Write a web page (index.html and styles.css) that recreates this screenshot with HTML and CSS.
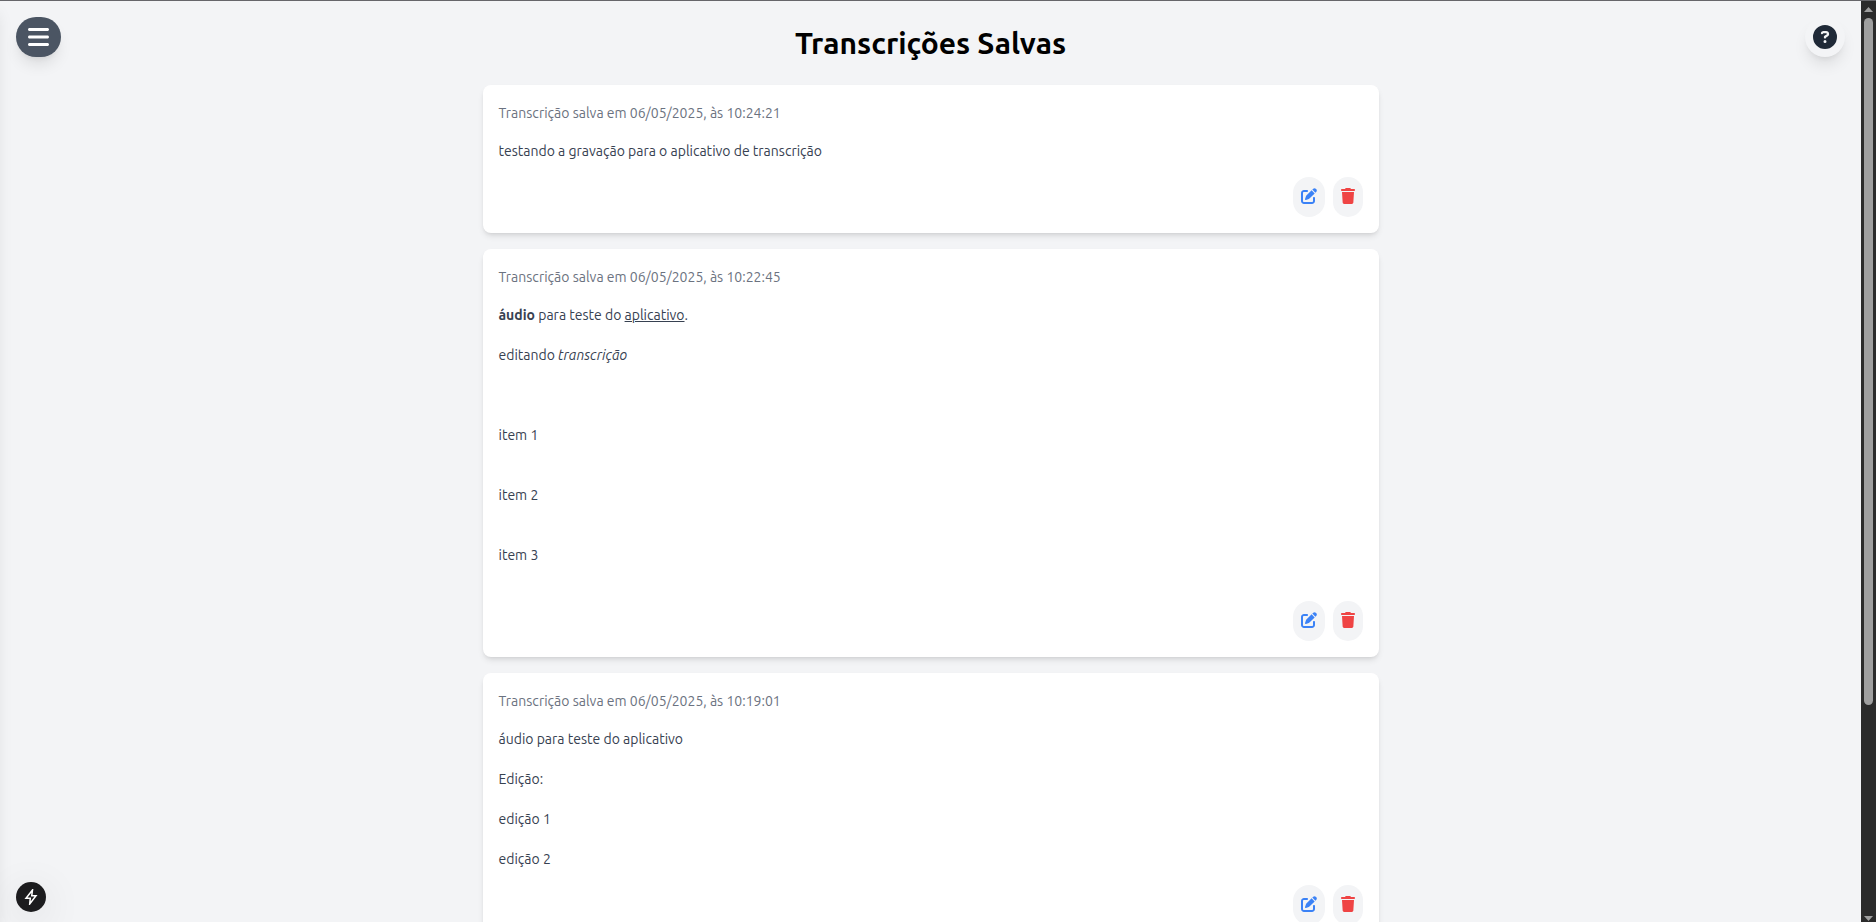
FILE: index.html
```
<!DOCTYPE html>
<html lang="pt-BR">
<head>
<meta charset="utf-8">
<title>Transcrições Salvas</title>
<link rel="stylesheet" href="styles.css">
</head>
<body>
<svg class="sprite" aria-hidden="true">
  <symbol id="edit" viewBox="0 0 512 512"><path d="M471.600 21.700c-21.900-21.900-57.300-21.900-79.200 0L362.300 51.700l97.900 97.900 30.100-30.100c21.900-21.900 21.900-57.300 0-79.200L471.600 21.700zm-299.200 220c-6.100 6.100-10.800 13.600-13.500 21.900l-29.600 88.800c-2.900 8.600-.6 18.100 5.800 24.600s15.900 8.700 24.600 5.800l88.800-29.600c8.200-2.700 15.700-7.400 21.900-13.500L437.700 172.300 339.700 74.300 172.400 241.700zM96 64C43 64 0 107 0 160V416c0 53 43 96 96 96H352c53 0 96-43 96-96V320c0-17.700-14.300-32-32-32s-32 14.300-32 32v96c0 17.700-14.300 32-32 32H96c-17.700 0-32-14.300-32-32V160c0-17.700 14.300-32 32-32h96c17.700 0 32-14.300 32-32s-14.300-32-32-32H96z"/></symbol>
  <symbol id="trash" viewBox="0 0 448 512"><path d="M135.200 17.700L128 32H32C14.300 32 0 46.300 0 64S14.300 96 32 96H416c17.700 0 32-14.300 32-32s-14.300-32-32-32H320l-7.200-14.300C307.400 6.800 296.300 0 284.200 0H163.800c-12.100 0-23.200 6.800-28.600 17.700zM416 128H32L53.200 467c1.600 25.300 22.600 45 47.900 45H346.900c25.300 0 46.300-19.700 47.900-45L416 128z"/></symbol>
</svg>
<div class="window">
  <div class="page">
    <div class="drawer"></div>
    <button class="menu-button" type="button" aria-label="Abrir menu">
      <svg viewBox="0 0 448 512"><path d="M0 96C0 78.300 14.300 64 32 64H416c17.700 0 32 14.300 32 32s-14.300 32-32 32H32C14.300 128 0 113.700 0 96zM0 256c0-17.700 14.300-32 32-32H416c17.700 0 32 14.300 32 32s-14.300 32-32 32H32c-17.700 0-32-14.300-32-32zM448 416c0 17.700-14.300 32-32 32H32c-17.700 0-32-14.300-32-32s14.300-32 32-32H416c17.700 0 32 14.300 32 32z"/></svg>
    </button>
    <button class="help-button" type="button" aria-label="Ajuda">
      <svg viewBox="0 0 512 512"><path d="M256 512A256 256 0 1 0 256 0a256 256 0 1 0 0 512zM169.800 165.300c7.900-22.300 29.100-37.300 52.800-37.300h58.300c34.900 0 63.100 28.300 63.100 63.100c0 22.600-12.100 43.500-31.700 54.800L280 264.400c-.2 13-10.900 23.600-24 23.600c-13.300 0-24-10.700-24-24V250.500c0-8.600 4.600-16.500 12.100-20.800l44.300-25.400c4.700-2.700 7.600-7.700 7.600-13.100c0-8.400-6.800-15.100-15.100-15.100H222.600c-3.400 0-6.400 2.100-7.500 5.300l-.4 1.200c-4.400 12.500-18.200 19-30.600 14.600s-19-18.200-14.600-30.600l.4-1.200zM224 352a32 32 0 1 1 64 0 32 32 0 1 1 -64 0z"/></svg>
    </button>
    <button class="dev-button" type="button" aria-label="Ferramentas">
      <svg viewBox="0 0 16 16"><path d="M9.500 1 3 9.200H7.300L6.700 15 13 6.800H8.700Z"/></svg>
    </button>
    <main class="content">
      <h1 class="title">Transcrições Salvas</h1>
      <article class="card">
        <p class="meta">Transcrição salva em 06/05/2025, às 10:24:21</p>
        <div class="text"><p>testando a gravação para o aplicativo de transcrição</p></div>
        <div class="actions">
          <button class="action edit" type="button" aria-label="Editar"><svg><use href="#edit"/></svg></button>
          <button class="action delete" type="button" aria-label="Excluir"><svg><use href="#trash"/></svg></button>
        </div>
      </article>
      <article class="card">
        <p class="meta">Transcrição salva em 06/05/2025, às 10:22:45</p>
        <div class="text">
          <p><strong>áudio</strong> para teste do <u>aplicativo</u>.</p>
          <p>editando <em>transcrição</em></p>
          <ul class="items"><li>item 1</li><li>item 2</li><li>item 3</li></ul>
        </div>
        <div class="actions">
          <button class="action edit" type="button" aria-label="Editar"><svg><use href="#edit"/></svg></button>
          <button class="action delete" type="button" aria-label="Excluir"><svg><use href="#trash"/></svg></button>
        </div>
      </article>
      <article class="card">
        <p class="meta">Transcrição salva em 06/05/2025, às 10:19:01</p>
        <div class="text">
          <p>áudio para teste do aplicativo</p>
          <p>Edição:</p>
          <p>edição 1</p>
          <p>edição 2</p>
        </div>
        <div class="actions">
          <button class="action edit" type="button" aria-label="Editar"><svg><use href="#edit"/></svg></button>
          <button class="action delete" type="button" aria-label="Excluir"><svg><use href="#trash"/></svg></button>
        </div>
      </article>
    </main>
  </div>
  <div class="scrollbar" aria-hidden="true">
    <svg class="arrow" viewBox="0 0 9 5"><path d="M0 5 4.500 0 9 5Z"/></svg>
    <div class="track"><div class="thumb"></div></div>
    <svg class="arrow" viewBox="0 0 9 5"><path d="M0 0 4.500 5 9 0Z"/></svg>
  </div>
</div>
</body>
</html>
```
FILE: styles.css
```
* { box-sizing: border-box; margin: 0; padding: 0; }
body {
  font-family: Ubuntu, "Noto Sans", "Open Sans", sans-serif;
  background: #f3f4f6;
  color: #000;
  overflow: hidden;
}
button { border: 0; cursor: pointer; font: inherit; }
svg { display: block; fill: currentColor; }
.sprite { position: absolute; width: 0; height: 0; }

.window { display: flex; height: 100vh; border-top: 1px solid #66666a; }
.page { position: relative; flex: 1; overflow: hidden; }
.content {
  display: flex;
  flex-direction: column;
  gap: 16px;
  max-width: 896px;
  margin: 0 auto;
  padding: 24px 0;
}
.title {
  margin-bottom: 8px;
  font-size: 30px;
  line-height: 36px;
  font-weight: 600;
  text-align: center;
}

.card {
  display: flex;
  flex-direction: column;
  gap: 16px;
  padding: 16px;
  border-radius: 8px;
  background: #fff;
  box-shadow: 0 4px 6px -1px rgba(0, 0, 0, .1), 0 2px 4px -2px rgba(0, 0, 0, .1);
}
.meta { font-size: 14px; line-height: 24px; color: #6b7280; }
.text {
  display: flex;
  flex-direction: column;
  gap: 20px;
  font-size: 14px;
  line-height: 20px;
  color: #374151;
}
.items {
  display: flex;
  flex-direction: column;
  gap: 40px;
  padding: 40px 0 20px;
  list-style: none;
}
.actions { display: flex; justify-content: flex-end; gap: 8px; }
.action { padding: 11px 8px 13px; border-radius: 16px; background: #f3f4f6; }
.action svg { width: 16px; height: 16px; }
.edit { color: #3b82f6; }
.delete { color: #ef4444; }
.action.delete svg { width: 14px; }

.menu-button, .help-button, .dev-button { position: absolute; }
.menu-button, .help-button {
  top: 16px;
  padding: 8px;
  border-radius: 20px;
  box-shadow: 0 10px 15px -3px rgba(0, 0, 0, .1), 0 4px 6px -4px rgba(0, 0, 0, .1);
}
.menu-button { left: 16px; padding: 8px 12px; background: #4b5563; color: #fff; }
.menu-button svg { width: 21px; height: 24px; }
.help-button { right: 16px; background: #f3f4f6; color: #1f2937; }
.help-button svg { width: 24px; height: 24px; }
.dev-button {
  left: 16px;
  bottom: 10px;
  padding: 7px;
  border-radius: 50%;
  background: #1c1c1e;
  color: #fff;
  box-shadow: 0 8px 40px rgba(0, 0, 0, .12);
}
.dev-button svg { width: 16px; height: 16px; fill: none; stroke: currentColor; stroke-width: 1.5; }
/* Closed side drawer: only its shadow reaches the page */
.drawer {
  position: absolute;
  top: 0;
  bottom: 0;
  left: -256px;
  width: 256px;
  box-shadow: 0 10px 15px -3px rgba(0, 0, 0, .1);
}

.scrollbar {
  display: flex;
  flex-direction: column;
  align-items: center;
  gap: 6px;
  width: 15px;
  padding: 6px 0 1px;
  background: #2b2b2b;
}
.arrow { width: 9px; height: 5px; fill: #9f9f9f; }
.track { flex: 1; width: 9px; }
.thumb { height: 77%; border-radius: 5px; background: #9f9f9f; }
```
